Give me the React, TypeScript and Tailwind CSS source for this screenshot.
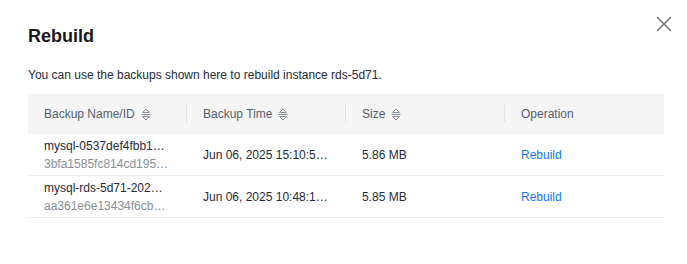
import React from "react";

const SortIcon = () => (
  <svg width="10" height="14" viewBox="0 0 10 14" className="ml-[6px] shrink-0" fill="none" stroke="#8a8e99" strokeWidth="1">
    <path d="M1.5 5.5 L5 2 L8.5 5.5 Z" strokeLinejoin="round" />
    <path d="M0.5 7.5 H9.5" />
    <path d="M1.5 9.5 L5 13 L8.5 9.5 Z" strokeLinejoin="round" />
  </svg>
);

const rows = [
  {
    name: "mysql-0537def4fbb1-20250606151053",
    id: "3bfa1585fc814cd1958a2e0c4f7b3d21br01",
    time: "Jun 06, 2025 15:10:53 GMT+08:00",
    size: "5.86 MB",
  },
  {
    name: "mysql-rds-5d71-20250606104812",
    id: "aa361e6e13434f6cb4d9e2a7c1f0b58dbr01",
    time: "Jun 06, 2025 10:48:12 GMT+08:00",
    size: "5.85 MB",
  },
];

export default function App() {
  return (
    <div
      className="relative w-[687px] h-[264px] bg-white text-[#252b3a]"
      style={{ fontFamily: '"Liberation Sans", Arial, sans-serif' }}
    >
      <button className="absolute left-[656px] top-[16px] w-4 h-4" aria-label="close">
        <svg width="16" height="16" viewBox="0 0 16 16" fill="none" stroke="#757575" strokeWidth="1.5">
          <path d="M1 1 L15 15 M15 1 L1 15" />
        </svg>
      </button>
      <div className="pl-[28px] pt-[24px]">
        <div className="text-[18px] leading-[24px] font-bold text-[#191919]">Rebuild</div>
        <div className="mt-[18px] text-[12px] leading-[18px] text-[#252b3a]">
          You can use the backups shown here to rebuild instance rds-5d71.
        </div>
        <div className="mt-[10px] w-[636px] text-[12px]">
          <div className="grid grid-cols-4 h-[40px] bg-[#f5f5f5] text-[#575d6c]">
            {[
              { t: "Backup Name/ID", s: true },
              { t: "Backup Time", s: true },
              { t: "Size", s: true },
              { t: "Operation", s: false },
            ].map((c, i) => (
              <div key={i} className="relative flex items-center pl-4 pr-4">
                <span className="leading-[18px]">{c.t}</span>
                {c.s && <SortIcon />}
                {i < 3 && (
                  <div className="absolute right-0 top-[11px] h-[17px] w-px bg-[#dfe1e6]" />
                )}
              </div>
            ))}
          </div>
          {rows.map((r, i) => (
            <div key={i} className="grid grid-cols-4 h-[42px] border-b border-[#ebebeb]">
              <div className="flex flex-col justify-center pl-4 pr-4 min-w-0 leading-[18px]">
                <div className="truncate text-[#252b3a] w-[122px]">{r.name}</div>
                <div className="truncate text-[#8a8e99]">{r.id}</div>
              </div>
              <div className="flex items-center pl-4 pr-4 min-w-0">
                <div className="truncate">{r.time}</div>
              </div>
              <div className="flex items-center pl-4 pr-4">{r.size}</div>
              <div className="flex items-center pl-4 pr-4">
                <span className="text-[#1476ff] cursor-pointer">Rebuild</span>
              </div>
            </div>
          ))}
        </div>
      </div>
    </div>
  );
}
